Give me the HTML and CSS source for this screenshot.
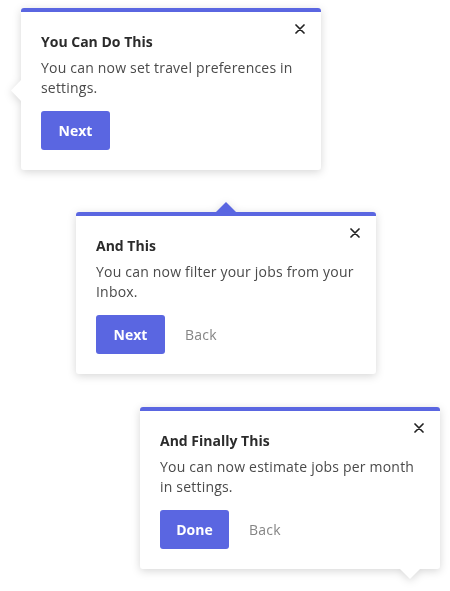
FILE: index.html
```html
<!DOCTYPE html>
<html>
<head>
<meta charset="utf-8">
<link rel="stylesheet" href="styles.css">
</head>
<body>
<div class="stack">
  <div class="tip tip--one arrow-left">
    <button class="close" aria-label="Close"><svg width="10" height="10" viewBox="0 0 10 10"><path d="M1 1L9 9M9 1L1 9" stroke="#222" stroke-width="1.7" stroke-linecap="round"/></svg></button>
    <div class="title">You Can Do This</div>
    <div class="body">You can now set travel preferences in settings.</div>
    <div class="actions"><button class="btn">Next</button></div>
  </div>
  <div class="tip tip--two arrow-top">
    <button class="close" aria-label="Close"><svg width="10" height="10" viewBox="0 0 10 10"><path d="M1 1L9 9M9 1L1 9" stroke="#222" stroke-width="1.7" stroke-linecap="round"/></svg></button>
    <div class="title">And This</div>
    <div class="body">You can now filter your jobs from your Inbox.</div>
    <div class="actions"><button class="btn">Next</button><span class="back">Back</span></div>
  </div>
  <div class="tip tip--three arrow-bottom">
    <button class="close" aria-label="Close"><svg width="10" height="10" viewBox="0 0 10 10"><path d="M1 1L9 9M9 1L1 9" stroke="#222" stroke-width="1.7" stroke-linecap="round"/></svg></button>
    <div class="title">And Finally This</div>
    <div class="body">You can now estimate jobs per month in settings.</div>
    <div class="actions"><button class="btn">Done</button><span class="back">Back</span></div>
  </div>
</div>
</body>
</html>
```
FILE: styles.css
```css
* { box-sizing: border-box; }
html, body { margin: 0; padding: 0; background: #fff; }
body { font-family: "Open Sans", Lato, sans-serif; width: 450px; height: 591px; overflow: hidden; }
.stack { display: flex; flex-direction: column; padding-top: 8px; }
.tip {
  position: relative;
  width: 300px;
  height: 162px;
  background: #fff;
  border-top: 4px solid #5a66e1;
  border-radius: 3px;
  filter: drop-shadow(0 2px 4px rgba(0,0,0,0.16));
  padding: 20px 20px 20px 20px;
}
.tip--one { margin-left: 21px; }
.tip--two { margin-left: 76px; margin-top: 42px; }
.tip--three { margin-left: 140px; margin-top: 33px; }
.tip::before {
  content: "";
  position: absolute;
  background: #fff;
}
.arrow-left::before { left: -10px; top: 68px; width: 10px; height: 21px; clip-path: polygon(0 50%, 100% 0, 100% 100%); }
.arrow-top::before { background: #5a66e1; top: -14px; left: 140px; width: 20px; height: 10px; clip-path: polygon(50% 0, 100% 100%, 0 100%); }
.arrow-bottom::before { bottom: -10px; right: 20px; width: 20px; height: 10px; clip-path: polygon(0 0, 100% 0, 50% 100%); }
.close {
  position: absolute;
  top: 12px;
  right: 16px;
  width: 10px;
  height: 10px;
  padding: 0;
  border: 0;
  background: none;
  display: flex;
}
.title { font-size: 14px; line-height: 20px; font-weight: 700; color: #2b2b2b; margin-bottom: 6px; position: relative; }
.body { font-size: 14px; letter-spacing: 0.2px; line-height: 20px; color: #4a4a4a; position: relative; }
.actions { display: flex; align-items: center; gap: 20px; margin-top: 13px; position: relative; }
.btn {
  width: 69px;
  height: 39px;
  border: 0;
  border-radius: 3px;
  background: #5a66e1;
  color: #fff;
  font-family: inherit;
  font-size: 14px;
  font-weight: 700;
  padding: 0;
}
.back { font-size: 14px; letter-spacing: 0.2px; color: #858585; }
```
